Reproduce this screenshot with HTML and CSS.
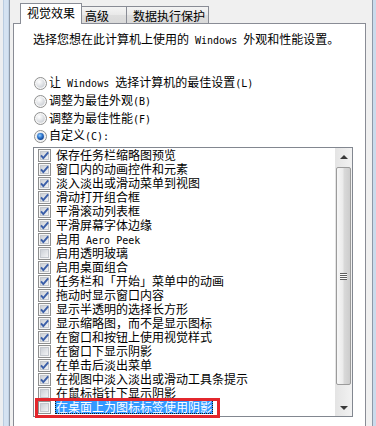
FILE: index.html
```html
<!DOCTYPE html>
<html lang="zh-CN">
<head>
<meta charset="utf-8">
<title>性能选项</title>
<link rel="stylesheet" href="styles.css">
</head>
<body>
<div class="screen">
  <div class="frame-left"></div>
  <div class="dialog">
    <div class="tabs">
      <div class="tab active">视觉效果</div>
      <div class="tab inactive t2">高级</div>
      <div class="tab inactive t3">数据执行保护</div>
    </div>
    <div class="panel">
      <p class="intro">选择您想在此计算机上使用的<span class="lat"> Windows </span>外观和性能设置。</p>
      <div class="radios">
        <div class="radio"><svg class="rb" viewBox="0 0 13 13"><use href="#rb-off"/></svg><span>让<span class="lat"> Windows </span>选择计算机的最佳设置<span class="lat">(L)</span></span></div>
        <div class="radio"><svg class="rb" viewBox="0 0 13 13"><use href="#rb-off"/></svg><span>调整为最佳外观<span class="lat">(B)</span></span></div>
        <div class="radio"><svg class="rb" viewBox="0 0 13 13"><use href="#rb-off"/></svg><span>调整为最佳性能<span class="lat">(F)</span></span></div>
        <div class="radio"><svg class="rb" viewBox="0 0 13 13"><use href="#rb-on"/></svg><span>自定义<span class="lat">(C):</span></span></div>
      </div>
      <div class="listbox">
        <ul class="items">
          <li class="item"><svg class="cb" viewBox="0 0 13 13"><use href="#cb-on"/></svg><span class="txt">保存任务栏缩略图预览</span></li>
          <li class="item"><svg class="cb" viewBox="0 0 13 13"><use href="#cb-on"/></svg><span class="txt">窗口内的动画控件和元素</span></li>
          <li class="item"><svg class="cb" viewBox="0 0 13 13"><use href="#cb-on"/></svg><span class="txt">淡入淡出或滑动菜单到视图</span></li>
          <li class="item"><svg class="cb" viewBox="0 0 13 13"><use href="#cb-on"/></svg><span class="txt">滑动打开组合框</span></li>
          <li class="item"><svg class="cb" viewBox="0 0 13 13"><use href="#cb-on"/></svg><span class="txt">平滑滚动列表框</span></li>
          <li class="item"><svg class="cb" viewBox="0 0 13 13"><use href="#cb-on"/></svg><span class="txt">平滑屏幕字体边缘</span></li>
          <li class="item"><svg class="cb" viewBox="0 0 13 13"><use href="#cb-on"/></svg><span class="txt">启用<span class="lat"> Aero Peek</span></span></li>
          <li class="item"><svg class="cb" viewBox="0 0 13 13"><use href="#cb-off"/></svg><span class="txt">启用透明玻璃</span></li>
          <li class="item"><svg class="cb" viewBox="0 0 13 13"><use href="#cb-on"/></svg><span class="txt">启用桌面组合</span></li>
          <li class="item"><svg class="cb" viewBox="0 0 13 13"><use href="#cb-on"/></svg><span class="txt">任务栏和「开始」菜单中的动画</span></li>
          <li class="item"><svg class="cb" viewBox="0 0 13 13"><use href="#cb-on"/></svg><span class="txt">拖动时显示窗口内容</span></li>
          <li class="item"><svg class="cb" viewBox="0 0 13 13"><use href="#cb-on"/></svg><span class="txt">显示半透明的选择长方形</span></li>
          <li class="item"><svg class="cb" viewBox="0 0 13 13"><use href="#cb-on"/></svg><span class="txt">显示缩略图，而不是显示图标</span></li>
          <li class="item"><svg class="cb" viewBox="0 0 13 13"><use href="#cb-on"/></svg><span class="txt">在窗口和按钮上使用视觉样式</span></li>
          <li class="item"><svg class="cb" viewBox="0 0 13 13"><use href="#cb-off"/></svg><span class="txt">在窗口下显示阴影</span></li>
          <li class="item"><svg class="cb" viewBox="0 0 13 13"><use href="#cb-on"/></svg><span class="txt">在单击后淡出菜单</span></li>
          <li class="item"><svg class="cb" viewBox="0 0 13 13"><use href="#cb-on"/></svg><span class="txt">在视图中淡入淡出或滑动工具条提示</span></li>
          <li class="item"><svg class="cb" viewBox="0 0 13 13"><use href="#cb-off"/></svg><span class="txt">在鼠标指针下显示阴影</span></li>
          <li class="item sel"><svg class="cb" viewBox="0 0 13 13"><use href="#cb-off"/></svg><span class="txt">在桌面上为图标标签使用阴影</span></li>
        </ul>
        <div class="scrollbar">
          <div class="sbtn up"></div>
          <div class="track"><div class="thumb"><span class="grip"></span></div></div>
          <div class="sbtn down"></div>
        </div>
        <div class="annot"></div>
      </div>
    </div>
  </div>
  <div class="frame-right"></div>
</div>
<svg class="defs" width="0" height="0" aria-hidden="true">
  <defs>
    <radialGradient id="rbg" cx="35%" cy="30%" r="80%">
      <stop offset="0" stop-color="#ffffff"/>
      <stop offset="1" stop-color="#c9cdd3"/>
    </radialGradient>
    <radialGradient id="dot" cx="40%" cy="35%" r="70%">
      <stop offset="0" stop-color="#9cd0fa"/>
      <stop offset="0.5" stop-color="#2f78d1"/>
      <stop offset="1" stop-color="#0d3a85"/>
    </radialGradient>
    <linearGradient id="cbg" x1="0" y1="0" x2="1" y2="1">
      <stop offset="0" stop-color="#c9cdd4"/>
      <stop offset="1" stop-color="#f5f6f7"/>
    </linearGradient>
    <symbol id="rb-off" viewBox="0 0 13 13">
      <circle cx="6.5" cy="6.5" r="6" fill="#f6f6f6" stroke="#8e8f8f"/>
      <circle cx="6.5" cy="6.5" r="4.3" fill="url(#rbg)"/>
    </symbol>
    <symbol id="rb-on" viewBox="0 0 13 13">
      <circle cx="6.5" cy="6.5" r="6" fill="#f6f6f6" stroke="#8e8f8f"/>
      <circle cx="6.5" cy="6.5" r="4.3" fill="#dfe6ee"/>
      <circle cx="6.5" cy="6.5" r="3.4" fill="url(#dot)"/>
    </symbol>
    <symbol id="cb-off" viewBox="0 0 13 13">
      <rect x="0.5" y="0.5" width="12" height="12" fill="#f6f6f6" stroke="#8e8f8f"/>
      <rect x="2.5" y="2.5" width="8" height="8" fill="url(#cbg)" stroke="#c3c7cd"/>
    </symbol>
    <symbol id="cb-on" viewBox="0 0 13 13">
      <rect x="0.5" y="0.5" width="12" height="12" fill="#f6f6f6" stroke="#8e8f8f"/>
      <rect x="2.5" y="2.5" width="8" height="8" fill="url(#cbg)" stroke="#c3c7cd"/>
      <path d="M3 6.4 L5.3 9.1 L10.2 3.3" fill="none" stroke="#3a5ea8" stroke-width="1.9"/>
    </symbol>
  </defs>
</svg>
</body>
</html>
```
FILE: styles.css
```css
* { box-sizing: border-box; }
html, body { margin: 0; padding: 0; }
body {
  width: 376px;
  height: 426px;
  overflow: hidden;
  background: #f0f0f0;
  color: #000;
  font-family: "Noto Sans CJK SC", "Noto Sans", sans-serif;
  font-size: 12px;
}
.screen { display: flex; height: 426px; }
.frame-left {
  width: 9px;
  flex: none;
  background: linear-gradient(to right, #eceef0 0 3px, #b9cce0 3px 4px, #d4e2f1 4px 8px, #c3d4e6 8px 9px);
}
.frame-right {
  width: 3px;
  flex: none;
  background: #cadbec;
}
.dialog {
  width: 364px;
  flex: none;
  display: flex;
  flex-direction: column;
  background: #f0f0f0;
  border-left: 1px solid #8d99a8;
  border-right: 1px solid #8d99a8;
  padding: 3px 6px 0 3px;
}
.tabs {
  display: flex;
  align-items: flex-end;
  height: 20px;
  padding-left: 7px;
  flex: none;
}
.tab {
  border: 1px solid #898c95;
  border-bottom: none;
  line-height: 14px;
  white-space: nowrap;
}
.tab.active {
  position: relative;
  z-index: 1;
  width: 62px;
  height: 21px;
  margin-bottom: -1px;
  background: #fff;
  text-align: center;
  padding-top: 2px;
}
.tab.inactive {
  height: 17px;
  margin-left: -1px;
  padding-top: 2px;
  background: linear-gradient(#f4f4f4, #e9e9e9 50%, #dedede 51%, #d9d9d9);
}
.t2 { width: 46px; padding-left: 3px; }
.t3 { width: 83px; padding-left: 6px; }

.panel {
  flex: 1;
  background: #fff;
  border: 1px solid #898c95;
  border-bottom: none;
  padding: 8px 0 0 19px;
}
.intro { margin: 0; line-height: 14px; white-space: nowrap; }
.lat {
  font-family: "DejaVu Sans Mono", "Liberation Mono", monospace;
  font-size: 10px;
  white-space: pre;
}
.radios {
  margin-top: 26px;
  display: grid;
  grid-template-rows: 18px 18px 17px 18px;
}
.radio {
  display: flex;
  align-items: center;
  gap: 2px;
  padding-left: 1px;
  line-height: 14px;
  white-space: nowrap;
}
.rb { width: 13px; height: 13px; flex: none; }

.listbox {
  position: relative;
  margin-top: 2px;
  width: 320px;
  height: 270px;
  border: 1px solid #828790;
  background: #fff;
  display: flex;
}
.items {
  flex: 1;
  list-style: none;
  margin: 0;
  padding: 0;
}
.item {
  height: 14px;
  display: flex;
  align-items: center;
  padding-left: 4px;
  line-height: 14px;
  white-space: nowrap;
}
.cb { width: 13px; height: 13px; flex: none; }
.txt { margin-left: 4px; padding: 0 1px; height: 14px; }
.item.sel .txt {
  background: #3399ff;
  color: #fff;
  outline: 1px dotted #1a1a1a;
  outline-offset: -1px;
}

.scrollbar {
  width: 17px;
  flex: none;
  display: flex;
  flex-direction: column;
  background: linear-gradient(to right, #e4e4e4, #f2f2f2);
}
.sbtn {
  height: 17px;
  flex: none;
  display: flex;
  align-items: center;
  justify-content: center;
}
.sbtn::before {
  content: "";
  width: 0;
  height: 0;
  border-left: 4px solid transparent;
  border-right: 4px solid transparent;
}
.up::before { border-bottom: 4px solid #3a3a3a; }
.down::before { border-top: 4px solid #3a3a3a; }
.track { flex: 1; padding: 2px 1px 0 1px; }
.thumb {
  height: 218px;
  border: 1px solid #9b9b9b;
  border-radius: 2px;
  background: linear-gradient(to right, #f7f7f7, #ebebeb 45%, #d9d9d9 55%, #cdcdcd);
  display: flex;
  align-items: center;
  justify-content: center;
}
.grip {
  width: 7px;
  height: 7px;
  background: repeating-linear-gradient(to bottom, #5e5e5e 0 1px, #fbfbfb 1px 2px);
}
.annot {
  position: absolute;
  left: 1px;
  top: 250px;
  width: 185px;
  height: 20px;
  border: 3px solid #e3262c;
  pointer-events: none;
}
.defs { display: block; width: 0; height: 0; overflow: hidden; }
```
